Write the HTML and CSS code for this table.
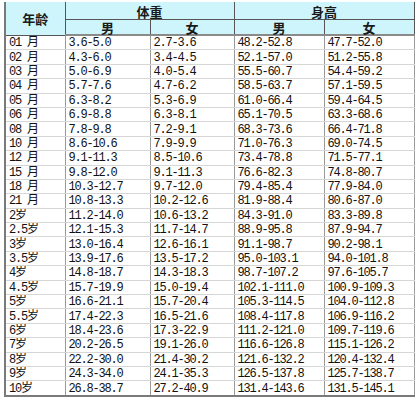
FILE: index.html
```html
<!DOCTYPE html>
<html lang="zh">
<head>
<meta charset="utf-8">
<link rel="stylesheet" href="styles.css">
</head>
<body>
<table class="chart">
  <colgroup>
    <col class="c-age">
    <col class="c-w1">
    <col class="c-w2">
    <col class="c-h1">
    <col class="c-h2">
  </colgroup>
  <thead>
    <tr class="h1">
      <th rowspan="2" class="age-head">年龄</th>
      <th colspan="2">体重</th>
      <th colspan="2">身高</th>
    </tr>
    <tr class="h2">
      <th>男</th><th>女</th><th>男</th><th>女</th>
    </tr>
  </thead>
  <tbody>
    <tr><td>01 月</td><td>3.6-5.0</td><td>2.7-3.6</td><td>48.2-52.8</td><td>47.7-52.0</td></tr>
    <tr><td>02 月</td><td>4.3-6.0</td><td>3.4-4.5</td><td>52.1-57.0</td><td>51.2-55.8</td></tr>
    <tr><td>03 月</td><td>5.0-6.9</td><td>4.0-5.4</td><td>55.5-60.7</td><td>54.4-59.2</td></tr>
    <tr><td>04 月</td><td>5.7-7.6</td><td>4.7-6.2</td><td>58.5-63.7</td><td>57.1-59.5</td></tr>
    <tr><td>05 月</td><td>6.3-8.2</td><td>5.3-6.9</td><td>61.0-66.4</td><td>59.4-64.5</td></tr>
    <tr><td>06 月</td><td>6.9-8.8</td><td>6.3-8.1</td><td>65.1-70.5</td><td>63.3-68.6</td></tr>
    <tr><td>08 月</td><td>7.8-9.8</td><td>7.2-9.1</td><td>68.3-73.6</td><td>66.4-71.8</td></tr>
    <tr><td>10 月</td><td>8.6-10.6</td><td>7.9-9.9</td><td>71.0-76.3</td><td>69.0-74.5</td></tr>
    <tr><td>12 月</td><td>9.1-11.3</td><td>8.5-10.6</td><td>73.4-78.8</td><td>71.5-77.1</td></tr>
    <tr><td>15 月</td><td>9.8-12.0</td><td>9.1-11.3</td><td>76.6-82.3</td><td>74.8-80.7</td></tr>
    <tr><td>18 月</td><td>10.3-12.7</td><td>9.7-12.0</td><td>79.4-85.4</td><td>77.9-84.0</td></tr>
    <tr><td>21 月</td><td>10.8-13.3</td><td>10.2-12.6</td><td>81.9-88.4</td><td>80.6-87.0</td></tr>
    <tr><td>2岁</td><td>11.2-14.0</td><td>10.6-13.2</td><td>84.3-91.0</td><td>83.3-89.8</td></tr>
    <tr><td>2.5岁</td><td>12.1-15.3</td><td>11.7-14.7</td><td>88.9-95.8</td><td>87.9-94.7</td></tr>
    <tr><td>3岁</td><td>13.0-16.4</td><td>12.6-16.1</td><td>91.1-98.7</td><td>90.2-98.1</td></tr>
    <tr><td>3.5岁</td><td>13.9-17.6</td><td>13.5-17.2</td><td>95.0-103.1</td><td>94.0-101.8</td></tr>
    <tr><td>4岁</td><td>14.8-18.7</td><td>14.3-18.3</td><td>98.7-107.2</td><td>97.6-105.7</td></tr>
    <tr><td>4.5岁</td><td>15.7-19.9</td><td>15.0-19.4</td><td>102.1-111.0</td><td>100.9-109.3</td></tr>
    <tr><td>5岁</td><td>16.6-21.1</td><td>15.7-20.4</td><td>105.3-114.5</td><td>104.0-112.8</td></tr>
    <tr><td>5.5岁</td><td>17.4-22.3</td><td>16.5-21.6</td><td>108.4-117.8</td><td>106.9-116.2</td></tr>
    <tr><td>6岁</td><td>18.4-23.6</td><td>17.3-22.9</td><td>111.2-121.0</td><td>109.7-119.6</td></tr>
    <tr><td>7岁</td><td>20.2-26.5</td><td>19.1-26.0</td><td>116.6-126.8</td><td>115.1-126.2</td></tr>
    <tr><td>8岁</td><td>22.2-30.0</td><td>21.4-30.2</td><td>121.6-132.2</td><td>120.4-132.4</td></tr>
    <tr><td>9岁</td><td>24.3-34.0</td><td>24.1-35.3</td><td>126.5-137.8</td><td>125.7-138.7</td></tr>
    <tr><td>10岁</td><td>26.8-38.7</td><td>27.2-40.9</td><td>131.4-143.6</td><td>131.5-145.1</td></tr>
  </tbody>
</table>
</body>
</html>
```

FILE: styles.css
```css
html, body {
  margin: 0;
  padding: 0;
  background: #ffffff;
}

.chart {
  margin: 2px 0 0 4px;
  width: 409px;
  border-collapse: collapse;
  table-layout: fixed;
  border-left: 2px solid #7a7a7a;
  border-right: 1px solid #8a8a8a;
  border-bottom: 2px solid #7a7a7a;
  font-family: "Liberation Mono", "Noto Sans CJK SC", monospace;
  font-size: 12px;
  color: #111111;
}

.c-age { width: 60px; }
.c-w1 { width: 85px; }
.c-w2 { width: 84px; }
.c-h1 { width: 90px; }
.c-h2 { width: 90px; }

.chart th {
  background: #cdf5fb;
  font-family: "Noto Sans CJK SC", sans-serif;
  font-weight: bold;
  font-size: 13px;
  color: #1a1a1a;
  padding: 0;
  line-height: 13px;
  text-align: center;
  border-left: 1px solid #555555;
  border-right: 1px solid #555555;
}

.chart .h1 th {
  height: 16px;
  padding-top: 1px;
  border-bottom: 1px solid #555555;
}

.chart .h2 th {
  height: 12px;
  padding-top: 1px;
  border-bottom: 2px solid #8a8a8a;
}

.chart .age-head {
  border-bottom: 2px solid #8a8a8a;
}

.chart td {
  height: 12.4px;
  padding: 1px 0 0 3px;
  line-height: 12px;
  letter-spacing: -1.2px;
  white-space: nowrap;
  overflow: hidden;
  border-left: 1px solid #9a9a9a;
  border-right: 1px solid #9a9a9a;
  border-bottom: 1px solid #d6d6d6;
}
```
